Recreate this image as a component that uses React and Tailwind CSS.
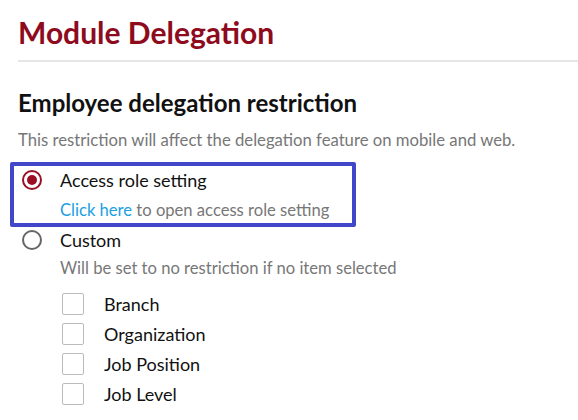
const Radio = ({ checked }) => (
  <span
    className={
      "flex items-center justify-center w-[20px] h-[20px] rounded-full border-2 " +
      (checked ? "border-[#9b0f24]" : "border-[#666]")
    }
  >
    {checked && <span className="w-[10px] h-[10px] rounded-full bg-[#9b0f24]" />}
  </span>
);

const Checkbox = ({ label }) => (
  <div className="flex items-center h-[30px]">
    <span className="w-[22px] h-[22px] border border-[#bbb] rounded-[2px] bg-white" />
    <span className="ml-[20px] text-[18px] text-[#111]">{label}</span>
  </div>
);

export default function App() {
  return (
    <div className="w-[578px] h-[420px] bg-white overflow-hidden font-['Lato',sans-serif]">
      <div className="pl-[18px] pt-[14px]">
        <h1 className="text-[30px] font-bold text-[#8e0b1e] leading-[36px]">Module Delegation</h1>
        <div className="mt-[10px] h-[2px] bg-[#e6e6e6]" />
        <h2 className="mt-[26px] text-[24px] font-bold text-[#111] leading-[30px]">
          Employee delegation restriction
        </h2>
        <p className="mt-[11px] text-[16.7px] text-[#777] leading-[22px]">
          This restriction will affect the delegation feature on mobile and web.
        </p>
      </div>

      <div className="mt-[11px] ml-[10px] w-[346px] border-[4px] border-[#4247c9] rounded-[2px] pl-[8px] pb-[2px]">
        <div className="flex items-center h-[28px]">
          <Radio checked />
          <span className="ml-[18px] text-[18px] text-[#111]">Access role setting</span>
        </div>
        <div className="ml-[38px] mt-[5px] text-[16.6px] text-[#777] leading-[22px]">
          <span className="text-[#1ba0e2]">Click here</span> to open access role setting
        </div>
      </div>

      <div className="pl-[22px]">
        <div className="flex items-center h-[26px]">
          <Radio />
          <span className="ml-[18px] text-[18px] text-[#111]">Custom</span>
        </div>
        <div className="ml-[38px] mt-[4px] text-[16.6px] text-[#777] leading-[22px]">
          Will be set to no restriction if no item selected
        </div>
        <div className="ml-[40px] mt-[10px] flex flex-col">
          <Checkbox label="Branch" />
          <Checkbox label="Organization" />
          <Checkbox label="Job Position" />
          <Checkbox label="Job Level" />
        </div>
      </div>
    </div>
  );
}
